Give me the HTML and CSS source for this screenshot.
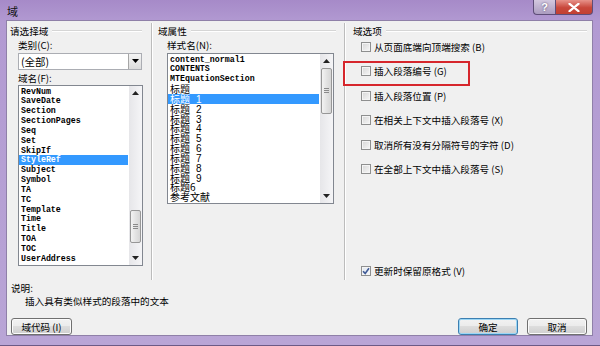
FILE: index.html
```html
<!DOCTYPE html>
<html lang="zh-CN">
<head>
    <meta charset="UTF-8">
    <title>域</title>
    <link rel="stylesheet" href="styles.css">
</head>
<body>
<div class="window">
    <div class="titlebar">
        <span class="title">域</span>
        <div class="caption">
            <span class="cap-btn cap-help">?</span>
            <span class="cap-btn cap-close">
                <svg width="12" height="9" viewBox="0 0 12 9"><path d="M1.5 0.8 L10.5 8.2 M10.5 0.8 L1.5 8.2" stroke="#fff" stroke-width="2.2" stroke-linecap="round"/></svg>
            </span>
        </div>
    </div>

    <div class="client">
        <div class="groups">
            <!-- 请选择域 -->
            <div class="group group-select">
                <div class="group-head"><span>请选择域</span><i></i></div>
                <div class="field-label">类别(C):</div>
                <div class="combo">
                    <span class="combo-text">(全部)</span>
                    <span class="combo-btn"><svg width="7" height="4" viewBox="0 0 7 4"><path d="M0 0 H7 L3.5 4z"/></svg></span>
                </div>
                <div class="field-label">域名(F):</div>
                <div class="listbox list-names">
                    <ul class="items">
                        <li>RevNum</li>
                        <li>SaveDate</li>
                        <li>Section</li>
                        <li>SectionPages</li>
                        <li>Seq</li>
                        <li>Set</li>
                        <li>SkipIf</li>
                        <li class="selected">StyleRef</li>
                        <li>Subject</li>
                        <li>Symbol</li>
                        <li>TA</li>
                        <li>TC</li>
                        <li>Template</li>
                        <li>Time</li>
                        <li>Title</li>
                        <li>TOA</li>
                        <li>TOC</li>
                        <li>UserAddress</li>
                    </ul>
                    <div class="scrollbar">
                        <span class="sb-arrow"><svg width="7" height="4" viewBox="0 0 7 4"><path d="M0 4 L3.5 0 L7 4z"/></svg></span>
                        <div class="sb-track"><span class="sb-thumb"><i></i></span></div>
                        <span class="sb-arrow"><svg width="7" height="4" viewBox="0 0 7 4"><path d="M0 0 H7 L3.5 4z"/></svg></span>
                    </div>
                </div>
            </div>

            <!-- 域属性 -->
            <div class="group group-props">
                <div class="group-head"><span>域属性</span><i></i></div>
                <div class="field-label">样式名(N):</div>
                <div class="listbox list-styles">
                    <ul class="items">
                        <li>content_normal1</li>
                        <li>CONTENTS</li>
                        <li>MTEquationSection</li>
                        <li class="cjk">标题</li>
                        <li class="cjk selected">标题<span class="num">1</span></li>
                        <li class="cjk">标题<span class="num">2</span></li>
                        <li class="cjk">标题<span class="num">3</span></li>
                        <li class="cjk">标题<span class="num">4</span></li>
                        <li class="cjk">标题<span class="num">5</span></li>
                        <li class="cjk">标题<span class="num">6</span></li>
                        <li class="cjk">标题<span class="num">7</span></li>
                        <li class="cjk">标题<span class="num">8</span></li>
                        <li class="cjk">标题<span class="num">9</span></li>
                        <li class="cjk">标题6</li>
                        <li class="cjk">参考文献</li>
                    </ul>
                    <div class="scrollbar">
                        <span class="sb-arrow"><svg width="7" height="4" viewBox="0 0 7 4"><path d="M0 4 L3.5 0 L7 4z"/></svg></span>
                        <div class="sb-track"><span class="sb-thumb"><i></i></span></div>
                        <span class="sb-arrow"><svg width="7" height="4" viewBox="0 0 7 4"><path d="M0 0 H7 L3.5 4z"/></svg></span>
                    </div>
                </div>
            </div>

            <!-- 域选项 -->
            <div class="group group-options">
                <div class="group-head"><span>域选项</span><i></i></div>
                <div class="options">
                    <label class="option"><span class="check"></span>从页面底端向顶端搜索 (B)</label>
                    <label class="option marked"><span class="check"></span>插入段落编号 (G)</label>
                    <label class="option"><span class="check"></span>插入段落位置 (P)</label>
                    <label class="option"><span class="check"></span>在相关上下文中插入段落号 (X)</label>
                    <label class="option"><span class="check"></span>取消所有没有分隔符号的字符 (D)</label>
                    <label class="option"><span class="check"></span>在全部上下文中插入段落号 (S)</label>
                </div>
                <label class="option keep-format">
                    <span class="check checked"><svg width="8" height="8" viewBox="0 0 8 8"><path d="M1 4.2 L3.2 6.4 L7 1.2" fill="none" stroke="#3f5a96" stroke-width="1.6"/></svg></span>更新时保留原格式 (V)
                </label>
            </div>
        </div>

        <div class="description">
            <div class="desc-title">说明:</div>
            <div class="desc-text">插入具有类似样式的段落中的文本</div>
        </div>

        <div class="button-row">
            <button class="btn btn-codes">域代码 (I)</button>
            <span class="spacer"></span>
            <button class="btn btn-default">确定</button>
            <button class="btn">取消</button>
        </div>
    </div>
</div>
</body>
</html>
```

FILE: styles.css
```css
* {
    box-sizing: border-box;
}

body {
    margin: 0;
    width: 600px;
    height: 346px;
    overflow: hidden;
    font-family: "Noto Sans CJK SC", "Noto Sans", sans-serif;
    font-size: 9.6px;
    color: #000;
    background: #b7a2d4;
}

.window {
    width: 600px;
    height: 346px;
    display: flex;
    flex-direction: column;
    padding: 0 7px 9px 6px;
    background: linear-gradient(to bottom, #a68ac8 0px, #b29ad2 22px, #b9a5d6 100%);
    border-bottom: 1px solid #6c5a86;
}

/* title bar */
.titlebar {
    height: 22px;
    display: flex;
    align-items: flex-start;
    justify-content: space-between;
}

.title {
    font-size: 11px;
    line-height: 12px;
    padding: 5px 0 0 1px;
    color: #111;
}

.caption {
    display: flex;
}

.cap-btn {
    height: 15px;
    display: flex;
    align-items: center;
    justify-content: center;
    border: 1px solid #5e4d78;
    border-top: none;
    color: #fff;
}

.cap-help {
    width: 22px;
    border-right: none;
    border-radius: 0 0 0 4px;
    background: linear-gradient(to bottom, #d3c8df, #ab9cc0);
    font-family: "Liberation Sans", sans-serif;
    font-weight: bold;
    font-size: 11px;
    text-shadow: 0 0 2px #4b3d63;
}

.cap-close {
    width: 38px;
    border-radius: 0 0 4px 0;
    background: linear-gradient(to bottom, #e7928a, #c8473b 55%, #c24033);
}

/* client area */
.client {
    flex: 1;
    display: flex;
    flex-direction: column;
    background: #f0f0f0;
    border: 1px solid #8f80a8;
}

.groups {
    display: grid;
    grid-template-columns: 145px 193px 1fr;
    height: 257px;
    margin-top: 2px;
}

.group {
    display: flex;
    flex-direction: column;
    padding-top: 2px;
}

.group-select,
.group-props {
    border-right: 1px solid #bcbcbc;
    box-shadow: 1px 0 0 #fff;
}

.group-head {
    height: 12px;
    display: flex;
    align-items: center;
    line-height: 12px;
}

.group-head i {
    flex: 1;
    height: 2px;
    margin-left: 4px;
    border-top: 1px solid #d5d5d5;
    border-bottom: 1px solid #fff;
}

.group-select .group-head { padding: 0 9px 0 3px; }
.group-props .group-head { padding: 0 8px 0 6px; }
.group-options .group-head { padding: 0 5px 0 8px; }

.field-label {
    height: 12px;
    line-height: 12px;
    margin-top: 2px;
}

.group-select .field-label,
.group-select .combo,
.group-select .listbox {
    margin-left: 11px;
}

.group-props .field-label,
.group-props .listbox {
    margin-left: 15px;
}

/* combo box */
.combo {
    width: 124px;
    height: 17px;
    margin-top: 2px;
    display: flex;
    align-items: center;
    justify-content: space-between;
    background: #fff;
    border: 1px solid #abadb3;
}

.combo-text {
    padding-left: 2px;
    font-size: 10.5px;
}

.combo-btn {
    width: 13px;
    height: 15px;
    display: flex;
    align-items: center;
    justify-content: center;
    border-left: 1px solid #a6a6a6;
    background: linear-gradient(to bottom, #f4f4f4, #dcdcdc);
}

/* list boxes */
.listbox {
    display: flex;
    margin-top: 1px;
    background: #fff;
    border: 1px solid #828790;
}

.list-names {
    width: 125px;
    height: 181px;
}

.list-styles {
    width: 167px;
    height: 151px;
    margin-top: 2px;
}

.items {
    flex: 1;
    margin: 0;
    padding: 1px 1px 0 0;
    list-style: none;
    overflow: hidden;
}

.items li {
    height: 9.85px;
    line-height: 9.85px;
    padding-left: 2px;
    font-family: "Liberation Mono", monospace;
    font-weight: bold;
    font-size: 8.3px;
    white-space: nowrap;
}

.items li.cjk {
    font-family: "Noto Sans CJK SC", sans-serif;
    font-weight: normal;
    font-size: 10px;
}

.items li .num {
    margin-left: 6px;
    font-family: "Liberation Sans", sans-serif;
    font-size: 10px;
}

.items li.selected {
    background: #3399ff;
    color: #fff;
}

.scrollbar {
    width: 13px;
    display: flex;
    flex-direction: column;
    background: linear-gradient(to right, #e6e6e9, #f5f5f7);
}

.sb-arrow {
    height: 14px;
    display: flex;
    align-items: center;
    justify-content: center;
}

.sb-arrow svg {
    fill: #222;
}

.sb-track {
    flex: 1;
    display: flex;
    flex-direction: column;
}

.sb-thumb {
    margin: 0 1px;
    display: flex;
    align-items: center;
    justify-content: center;
    border: 1px solid #979797;
    border-radius: 2px;
    background: linear-gradient(to right, #f3f3f3, #e3e3e3 50%, #d6d6d6);
}

.sb-thumb i {
    width: 5px;
    height: 5px;
    border-top: 1px solid #8a8a8a;
    border-bottom: 1px solid #8a8a8a;
    background: linear-gradient(#8a8a8a, #8a8a8a) center / 100% 1px no-repeat;
}

.list-names .sb-thumb {
    margin-top: 110px;
    height: 33px;
}

.list-styles .sb-thumb {
    margin-top: 0;
    height: 46px;
}

/* options */
.options {
    display: flex;
    flex-direction: column;
    gap: 12.6px;
    margin-top: 4px;
}

.option {
    height: 12px;
    display: flex;
    align-items: center;
    margin-left: 16px;
    line-height: 12px;
    position: relative;
    white-space: nowrap;
}

.marked::after {
    content: "";
    position: absolute;
    left: -18px;
    top: -3.7px;
    width: 123px;
    height: 21px;
    border: 2px solid #d6262c;
}

.check {
    width: 10px;
    height: 10px;
    margin-right: 3px;
    display: flex;
    align-items: center;
    justify-content: center;
    border: 1px solid #8e8f8f;
    background: linear-gradient(135deg, #d6d6d6, #f7f7f7);
    box-shadow: inset 0 0 0 1px #f4f4f4;
}

.check.checked {
    background: linear-gradient(135deg, #dfe6ef, #f7f9fb);
}

.keep-format {
    margin-top: auto;
    margin-bottom: 3px;
}

/* description */
.description {
    padding-left: 4px;
    margin-top: 2px;
}

.desc-title {
    height: 12px;
    line-height: 12px;
}

.desc-text {
    height: 12px;
    line-height: 12px;
    margin-top: 1.5px;
    padding-left: 14px;
}

/* buttons */
.button-row {
    display: flex;
    margin-top: 11px;
    padding: 0 5px 0 4px;
}

.spacer {
    flex: 1;
}

.btn {
    width: 60px;
    height: 17px;
    padding: 0;
    font-family: inherit;
    font-size: 9.6px;
    color: #000;
    border: 1px solid #707070;
    border-radius: 3px;
    background: linear-gradient(to bottom, #f2f2f2, #ebebeb 50%, #dddddd 50%, #cfcfcf);
    box-shadow: inset 0 0 0 1px #fbfbfb;
}

.btn-codes {
    width: 61px;
}

.btn-default {
    margin-right: 9px;
    border-color: #3c7fb1;
    box-shadow: inset 0 0 0 1px #9bd6f5;
}
```
